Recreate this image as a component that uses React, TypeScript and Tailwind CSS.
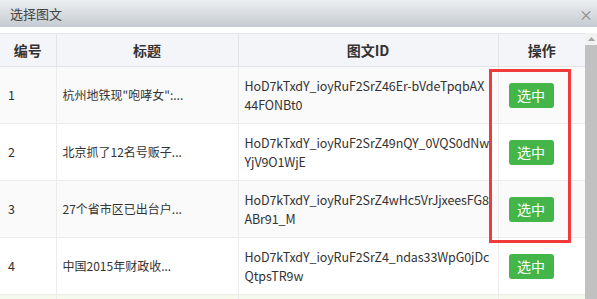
const rows = [
  { no: "1", title: "杭州地铁现\"咆哮女\":...", id: ["HoD7kTxdY_ioyRuF2SrZ46Er-bVdeTpqbAX", "44FONBt0"] },
  { no: "2", title: "北京抓了12名号贩子...", id: ["HoD7kTxdY_ioyRuF2SrZ49nQY_0VQS0dNw", "YjV9O1WjE"] },
  { no: "3", title: "27个省市区已出台户...", id: ["HoD7kTxdY_ioyRuF2SrZ4wHc5VrJjxeesFG8", "ABr91_M"] },
  { no: "4", title: "中国2015年财政收...", id: ["HoD7kTxdY_ioyRuF2SrZ4_ndas33WpG0jDc", "QtpsTR9w"] },
];

export default function App() {
  return (
    <div className="relative w-[597px] h-[299px] overflow-hidden bg-white text-[#333] font-['Microsoft_YaHei','Noto_Sans_CJK_SC',sans-serif]">
      {/* dialog title */}
      <div className="flex h-[27px] items-center justify-between bg-gradient-to-b from-[#eceff2] to-[#c5cbd0] pl-[10px] pr-[4px]">
        <span className="text-[13px] text-[#444]">选择图文</span>
        <span className="text-[14px] leading-none text-[#888]">×</span>
      </div>
      <div className="h-[6px]" />

      <div className="flex h-[266px]">
        <div className="w-[585px] overflow-hidden">
          <table className="w-full table-fixed border-collapse text-[12.5px]">
            <colgroup>
              <col className="w-[56px]" />
              <col className="w-[182px]" />
              <col className="w-[260px]" />
              <col className="w-[87px]" />
            </colgroup>
            <thead>
              <tr className="h-[33px] border-t border-b border-[#e3e4e8] bg-[#f4f5f9] text-[14px] text-[#333]">
                <th className="border-r border-[#e3e4e8] font-semibold">编号</th>
                <th className="border-r border-[#e3e4e8] font-semibold">标题</th>
                <th className="border-r border-[#e3e4e8] font-semibold">图文ID</th>
                <th className="font-semibold">操作</th>
              </tr>
            </thead>
            <tbody>
              {rows.map((r, i) => (
                <tr
                  key={r.no}
                  className={`h-[57px] border-b border-[#ececec] ${i % 2 === 0 ? "bg-[#fafafa]" : "bg-white"}`}
                >
                  <td className="border-r border-[#ececec] pl-[8px]">{r.no}</td>
                  <td className="border-r border-[#ececec] pl-[6px] text-[12px]">{r.title}</td>
                  <td className="border-r border-[#ececec] pl-[6px] pr-[6px] leading-[19px] tracking-[-0.1px]">
                    {r.id.map((line) => (
                      <div key={line} className="whitespace-nowrap">
                        {line}
                      </div>
                    ))}
                  </td>
                  <td className="pl-[10px]">
                    <button className="h-[25px] w-[45px] rounded-[3px] bg-[#44b549] text-[14px] text-white">
                      选中
                    </button>
                  </td>
                </tr>
              ))}
              <tr className="h-[30px] bg-[#f4faee]">
                <td className="border-r border-[#ececec]" />
                <td className="border-r border-[#ececec]" />
                <td className="border-r border-[#ececec]" />
                <td />
              </tr>
            </tbody>
          </table>
        </div>

        {/* scrollbar */}
        <div className="flex w-[12px] flex-col bg-[#f1f1f1]">
          <div className="flex h-[12px] items-center justify-center">
            <svg width="7" height="4" viewBox="0 0 7 4">
              <path d="M0 4 L3.5 0 L7 4 Z" fill="#a3a3a3" />
            </svg>
          </div>
          <div className="flex-1 bg-[#c1c1c1]" />
        </div>
      </div>

      {/* highlight annotation */}
      <div className="absolute left-[489px] top-[69px] h-[174px] w-[82px] border-[3px] border-[#f33a3a]" />
    </div>
  );
}
